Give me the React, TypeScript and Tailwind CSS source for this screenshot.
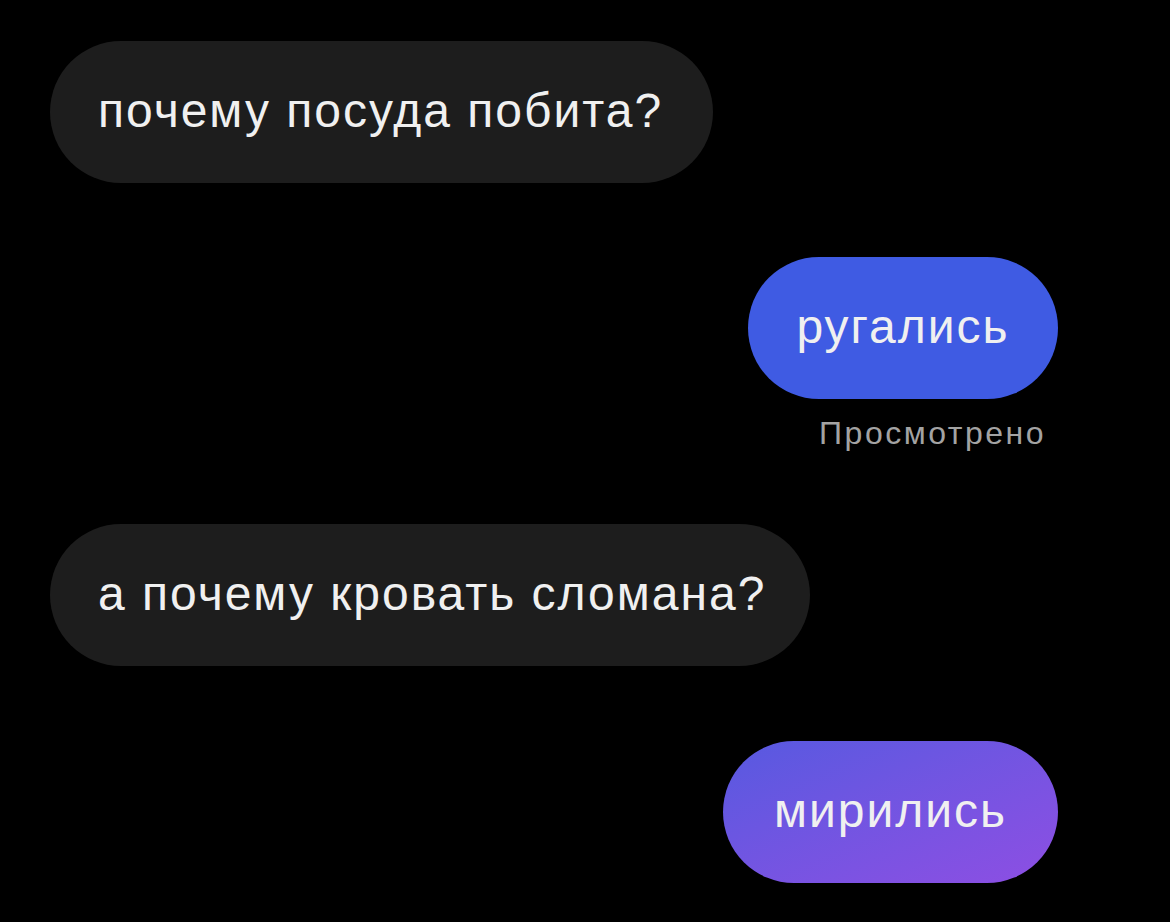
import React from "react";

type Message = {
  text: string;
  mine: boolean;
  seen?: boolean;
  bubbleClass: string;
  top: string;
};

const messages: Message[] = [
  {
    text: "почему посуда побита?",
    mine: false,
    bubbleClass: "bg-[#1d1d1d] w-[663px] pl-[48px]",
    top: "mt-[40px]",
  },
  {
    text: "ругались",
    mine: true,
    seen: true,
    bubbleClass: "bg-[#3f5be3] w-[310px] justify-center",
    top: "mt-[74px]",
  },
  {
    text: "а почему кровать сломана?",
    mine: false,
    bubbleClass: "bg-[#1d1d1d] w-[760px] pl-[48px]",
    top: "mt-[75px]",
  },
  {
    text: "мирились",
    mine: true,
    bubbleClass:
      "bg-linear-to-br from-[#5659e0] to-[#8d4ee3] w-[335px] justify-center",
    top: "mt-[75px]",
  },
];

const Bubble = ({ text, mine, seen, bubbleClass, top }: Message) => (
  <div className={`flex flex-col ${mine ? "items-end" : "items-start"} ${top}`}>
    <div className={`flex items-center h-[142px] rounded-full ${bubbleClass}`}>
      <span className="text-[48px] leading-none tracking-[2px] text-[#f0f0f0] pb-[2px]">
        {text}
      </span>
    </div>
    {seen && (
      <span className="mt-[18px] mr-[12px] text-[32px] leading-none tracking-[2.5px] text-[#a3a3a3]">
        Просмотрено
      </span>
    )}
  </div>
);

export default function App() {
  return (
    <div
      className="w-[1170px] h-[922px] bg-black overflow-hidden pl-[50px] pr-[112px] pt-px"
      style={{ fontFamily: "'Liberation Sans', Arial, sans-serif" }}
    >
      {messages.map((m) => (
        <Bubble key={m.text} {...m} />
      ))}
    </div>
  );
}
